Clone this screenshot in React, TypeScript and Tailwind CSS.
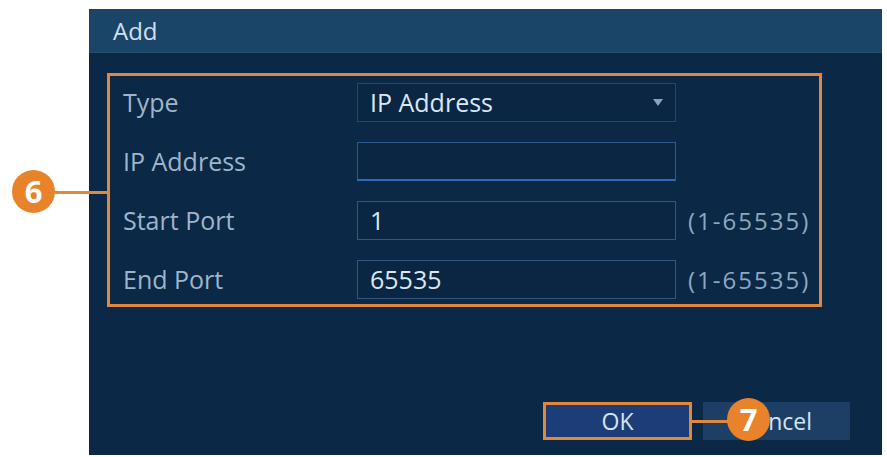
import React from "react";

const font = { fontFamily: '"Open Sans", "Noto Sans", sans-serif' };

const Row = ({
  label,
  value,
  range,
  select,
  focus,
}: {
  label: string;
  value?: string;
  range?: boolean;
  select?: boolean;
  focus?: boolean;
}) => (
  <div className="flex items-center h-[39px]">
    <div className="w-[247px] pl-[13px] text-[25px] text-[#9fb5cb] leading-none">{label}</div>
    <div
      className={
        "relative w-[319px] h-[39px] flex items-center pl-[12px] text-[25px] text-[#dbe7f3] leading-none bg-[#0a2643] border " +
        (focus
          ? "border-[#2c5a8c] border-b-2 border-b-[#2f6cb5]"
          : select
          ? "border-[#2a4663]"
          : "border-[#33577e]")
      }
    >
      {value}
      {select && (
        <svg className="absolute right-[12px] top-[15px]" width="10" height="7" viewBox="0 0 10 7">
          <path d="M0 0 H10 L5 7 Z" fill="#8aa3bd" />
        </svg>
      )}
    </div>
    {range && (
      <div className="ml-[12px] text-[24px] text-[#8ea7c0] leading-none tracking-[2px]">(1-65535)</div>
    )}
  </div>
);

const Badge = ({ n }: { n: string }) => (
  <div
    className="w-[43px] h-[43px] rounded-full bg-[#e8832b] flex items-center justify-center text-white text-[31px] font-bold leading-none"
    style={font}
  >
    {n}
  </div>
);

export default function App() {
  return (
    <div className="relative w-[887px] h-[457px] bg-white overflow-hidden" style={font}>
      <div className="ml-[89px] pt-[9px]">
        <div className="w-[793px] h-[446px] bg-[#0b2846] flex flex-col">
          <div className="h-[44px] bg-[#1a4468] border-b border-[#24506f] flex items-center pl-[24px] text-[24px] text-[#cfe0f0]">
            Add
          </div>
          <div className="ml-[18px] mt-[20px] w-[715px] h-[234px] border-[3px] border-[#e0893d] pt-[7px] flex flex-col gap-[20px]">
            <Row label="Type" value="IP Address" select />
            <Row label="IP Address" focus />
            <Row label="Start Port" value="1" range />
            <Row label="End Port" value="65535" range />
          </div>
          <div className="flex-1" />
          <div className="flex justify-end gap-[11px] pr-[32px] pb-[15px]">
            <div className="w-[149px] h-[38px] border-[3px] border-[#e0893d] bg-[#1c3d77] flex items-center justify-center text-[23px] text-[#d4e3f2]">
              OK
            </div>
            <div className="w-[147px] h-[38px] bg-[#1d3f66] flex items-center justify-center text-[23px] text-[#d4e3f2]">
              Cancel
            </div>
          </div>
        </div>
      </div>

      {/* callout 6 */}
      <div className="absolute left-[55px] top-[191px] w-[52px] h-[3px] bg-[#e0893d]" />
      <div className="absolute left-[12px] top-[170px]">
        <Badge n="6" />
      </div>

      {/* callout 7 */}
      <div className="absolute left-[692px] top-[420px] w-[37px] h-[3px] bg-[#e0893d]" />
      <div className="absolute left-[727px] top-[398px]">
        <Badge n="7" />
      </div>
    </div>
  );
}
